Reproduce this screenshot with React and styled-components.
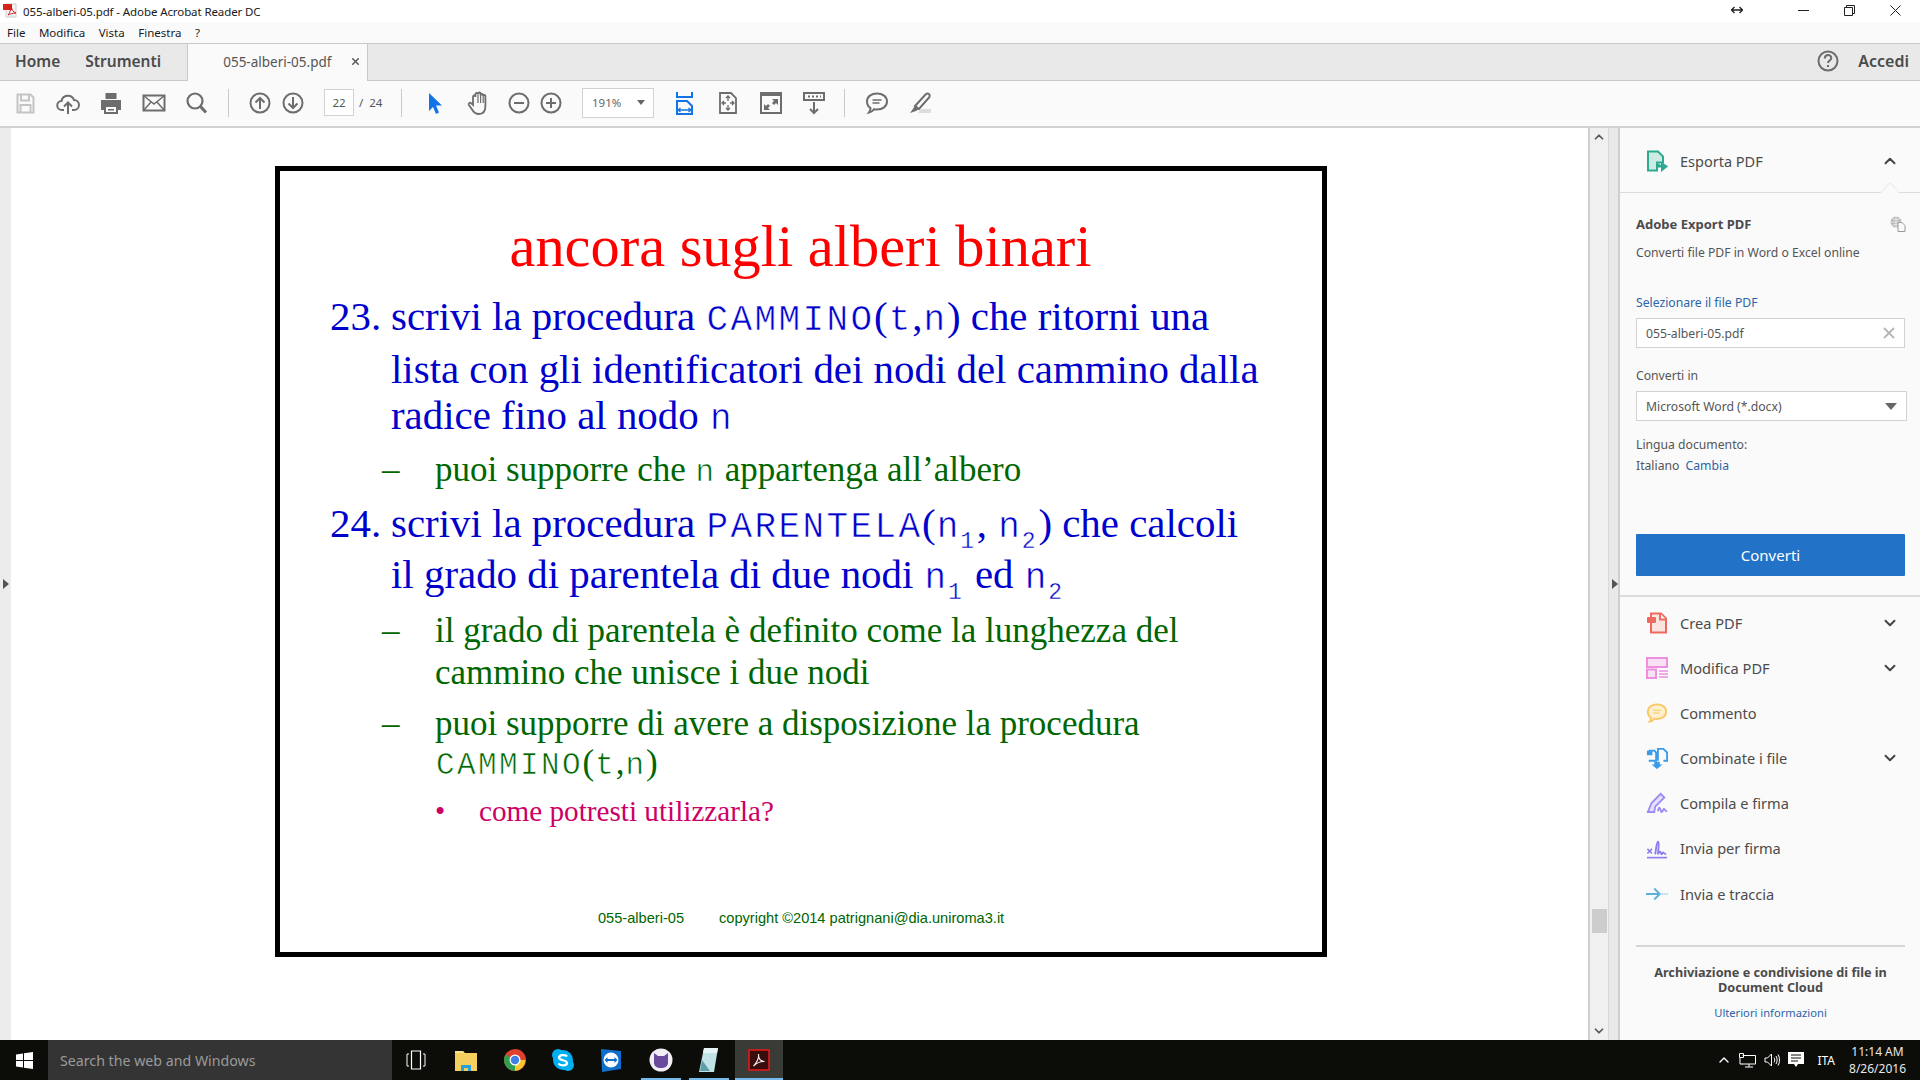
import React from 'react';
import styled, { createGlobalStyle } from 'styled-components';
import { ChevronUp, ChevronDown, X } from 'lucide-react';

const GlobalStyle = createGlobalStyle`
  html, body {
    margin: 0;
    padding: 0;
    overflow: hidden;
    background: #fff;
  }
  * { box-sizing: border-box; }
`;

const uiFont = `"Noto Sans", "Open Sans", "Liberation Sans", sans-serif`;

const Page = styled.div`
  width: 1920px;
  height: 1080px;
  display: flex;
  flex-direction: column;
  font-family: ${uiFont};
  color: #4b4b4b;
  overflow: hidden;
`;

/* window chrome */
const TitleBar = styled.div`
  height: 22px;
  background: #fff;
  display: flex;
  align-items: center;
  padding-left: 3px;
  font-size: 12px;
  color: #1a1a1a;
  flex: none;
`;
const TitleText = styled.span`
  margin-left: 4px;
  font-size: 11.5px;
  letter-spacing: -0.1px;
`;
const WindowControls = styled.div`
  margin-left: auto;
  display: flex;
  align-items: center;
  height: 22px;
  padding: 0 2px 2px 0;
  color: #222;
`;
const WinBtn = styled.div`
  width: ${(p) => p.$w}px;
  display: flex;
  justify-content: center;
`;

const MenuBar = styled.div`
  height: 21px;
  background: #fafafa;
  display: flex;
  align-items: center;
  padding-left: 7px;
  gap: 13.5px;
  font-size: 11.5px;
  color: #1a1a1a;
  flex: none;
`;

const TabBar = styled.div`
  height: 38px;
  background: #e9e9e9;
  border-top: 1px solid #c9c9c9;
  border-bottom: 1px solid #c9c9c9;
  display: flex;
  align-items: stretch;
  flex: none;
`;
const NavTab = styled.div`
  font-size: 15.5px;
  font-weight: 600;
  color: #4b4b4b;
  display: flex;
  align-items: center;
  padding-bottom: 2px;
  margin-left: ${(p) => p.$ml}px;
`;
const DocTab = styled.div`
  width: 181px;
  margin-left: 26px;
  margin-bottom: -1px;
  background: #fafafa;
  border-left: 1px solid #c9c9c9;
  border-right: 1px solid #c9c9c9;
  display: flex;
  align-items: center;
  padding: 0 0 2px 35px;
  font-size: 13.5px;
  color: #555;
`;
const TabClose = styled.span`
  margin-left: 19px;
  display: flex;
  color: #555;
`;
const TabRight = styled.div`
  margin-left: auto;
  display: flex;
  align-items: center;
  padding: 0 11px 2px 0;
  gap: 18px;
  font-size: 16px;
  font-weight: 600;
`;

const Toolbar = styled.div`
  height: 47px;
  background: #fafafa;
  border-bottom: 2px solid #d2d2d2;
  display: flex;
  align-items: center;
  padding: 0 0 2px 3px;
  flex: none;
`;
const Tool = styled.div`
  width: ${(p) => p.$w || 43}px;
  margin-left: ${(p) => p.$ml || 0}px;
  display: flex;
  justify-content: center;
  align-items: center;
`;
const ToolSep = styled.div`
  width: 1px;
  height: 28px;
  background: #c9c9c9;
  margin: 0 ${(p) => p.$r}px 0 ${(p) => p.$l}px;
`;
const PageInput = styled.div`
  width: 30px;
  height: 27px;
  margin-left: 15px;
  background: #fff;
  border: 1px solid #d2d2d2;
  font-size: 11.5px;
  display: flex;
  align-items: center;
  justify-content: center;
  color: #555;
`;
const PageTotal = styled.div`
  width: 47px;
  font-size: 11.5px;
  color: #555;
  padding-left: 5px;
  word-spacing: 3px;
`;
const ZoomSelect = styled.div`
  width: 72px;
  height: 30px;
  margin: 0 8px 0 15px;
  background: #fff;
  border: 1px solid #d2d2d2;
  font-size: 11.5px;
  color: #666;
  display: flex;
  align-items: center;
  padding-left: 9px;
  justify-content: space-between;
  padding-right: 8px;
`;
const Caret = styled.span`
  width: 0;
  height: 0;
  border-left: ${(p) => p.$s || 4}px solid transparent;
  border-right: ${(p) => p.$s || 4}px solid transparent;
  border-top: ${(p) => (p.$s || 4) + 1}px solid #666;
`;

/* main area */
const Main = styled.div`
  flex: 1;
  display: flex;
  min-height: 0;
`;
const LeftStrip = styled.div`
  width: 11px;
  background: #ececec;
  position: relative;
`;
const StripArrow = styled.span`
  position: absolute;
  top: 451px;
  left: ${(p) => p.$left}px;
  width: 0;
  height: 0;
  border-top: 5px solid transparent;
  border-bottom: 5px solid transparent;
  border-left: 6px solid #555;
`;
const DocArea = styled.div`
  flex: 1;
  background: #fff;
  padding: 38px 0 0 264px;
  border-right: 2px solid #cfcfcf;
`;
const Scrollbar = styled.div`
  width: 18px;
  background: #f0f0f0;
  position: relative;
  display: flex;
  flex-direction: column;
  justify-content: space-between;
  align-items: center;
  padding: 2px 0;
  color: #555;
`;
const Thumb = styled.div`
  position: absolute;
  top: 781px;
  left: 2px;
  width: 15px;
  height: 24px;
  background: #cdcdcd;
`;
const Splitter = styled.div`
  width: 12px;
  background: #e9e9e9;
  border-left: 1px solid #d8d8d8;
  border-right: 2px solid #cfcfcf;
  position: relative;
`;

/* slide */
const Slide = styled.div`
  width: 1052px;
  height: 791px;
  border: 5px solid #000;
  background: #fff;
  padding-top: 46px;
  font-family: "Liberation Serif", "Times New Roman", serif;
`;
const SlideTitle = styled.div`
  height: 60px;
  line-height: 60px;
  text-align: center;
  font-size: 58.4px;
  color: #ff0000;
  margin-right: 1px;
  margin-bottom: 18px;
`;
const Para = styled.div`
  display: grid;
  grid-template-columns: ${(p) => p.$col}px 1fr;
  padding-left: ${(p) => p.$left}px;
  margin-top: ${(p) => p.$mt || 0}px;
  color: ${(p) => p.$color};
  font-size: ${(p) => p.$size}px;
  line-height: ${(p) => p.$lh}px;
  white-space: nowrap;
`;
const Line = styled.div`
  height: ${(p) => p.$lh}px;
  margin-top: ${(p) => p.$mt || 0}px;
`;
/* the letters in the slide are thin Courier: narrower face, spaced out and thinned with a white stroke */
const Mono = styled.span`
  font-family: "Liberation Mono", "Courier New", monospace;
  font-size: ${(p) => (p.$small ? 31 : 36)}px;
  letter-spacing: 2.4px;
  margin-left: 1px;
  margin-right: -0.5px;
  -webkit-text-stroke: 0.6px #fff;
`;
const Sub = styled.sub`
  font-family: "Liberation Mono", "Courier New", monospace;
  font-size: 23px;
  letter-spacing: 2.8px;
  line-height: 0;
  vertical-align: -11px;
  -webkit-text-stroke: 0.4px #fff;
`;
const SlideFooter = styled.div`
  margin-top: 83px;
  height: 18px;
  line-height: 18px;
  padding-left: 318px;
  display: flex;
  gap: 35px;
  font-family: "Liberation Sans", Arial, sans-serif;
  font-size: 14.6px;
  color: #006600;
`;

/* right panel */
const Panel = styled.div`
  width: 300px;
  background: #fafafa;
  display: flex;
  flex-direction: column;
`;
const PanelHead = styled.div`
  height: 65px;
  border-bottom: 1px solid #dcdcdc;
  display: flex;
  align-items: center;
  padding: 2px 21px 0 26px;
  font-size: 14.5px;
  position: relative;
`;
const Notch = styled.span`
  position: absolute;
  right: 20px;
  bottom: -1px;
  width: 20px;
  height: 11px;
  background: #fafafa;
  clip-path: polygon(50% 0, 100% 100%, 0 100%);
  &::before {
    content: '';
    position: absolute;
    inset: 0;
    background: #dcdcdc;
    clip-path: polygon(50% 0, 100% 100%, 96% 100%, 50% 8%, 4% 100%, 0 100%);
  }
`;
const RowLabel = styled.span`
  margin-left: 12px;
  flex: 1;
`;
const PanelBody = styled.div`
  height: 404px;
  padding: 23px 14px 0 16px;
  border-bottom: 2px solid #dcdcdc;
  font-size: 12.2px;
`;
const ExportHead = styled.div`
  display: flex;
  justify-content: space-between;
  font-weight: 700;
  font-size: 13px;
  height: 16px;
  line-height: 16px;
`;
const Muted = styled.div`
  font-size: 12.2px;
  height: 16px;
  line-height: 16px;
  margin-top: ${(p) => p.$mt}px;
  color: ${(p) => (p.$link ? '#2c64a8' : '#555')};
`;
const Link = styled.span`
  color: #2c64a8;
  margin-left: 3px;
`;
const Field = styled.div`
  width: ${(p) => p.$w}px;
  height: 30px;
  margin-top: 7px;
  background: #fff;
  border: 1px solid #d2d2d2;
  display: flex;
  align-items: center;
  justify-content: space-between;
  padding: 0 9px;
  font-size: 12.2px;
  color: #555;
`;
const ConvertBtn = styled.div`
  width: 269px;
  height: 42px;
  margin-top: 60px;
  background: #2272c8;
  color: #fff;
  font-size: 15px;
  display: flex;
  align-items: center;
  justify-content: center;
  border-radius: 1px;
`;
const ToolList = styled.div`
  padding: 3px 21px 0 26px;
  height: 348px;
`;
const ToolRow = styled.div`
  height: ${(p) => p.$h || 45}px;
  display: flex;
  align-items: center;
  font-size: 14.6px;
`;
const RowIcon = styled.span`
  width: 22px;
  display: flex;
  justify-content: center;
`;
const Divider = styled.div`
  height: 2px;
  margin: 0 15px 0 16px;
  background: #d6d6d6;
`;
const CloudBlock = styled.div`
  text-align: center;
  padding: 18px 15px 0 16px;
  font-size: 12.7px;
  font-weight: 700;
  line-height: 15px;
`;
const CloudLink = styled.div`
  margin-top: 10px;
  font-weight: 400;
  font-size: 11.2px;
  color: #2c64a8;
`;

/* taskbar */
const Taskbar = styled.div`
  height: 40px;
  background: #0c0d08;
  display: flex;
  align-items: stretch;
  flex: none;
  color: #fff;
`;
const StartBtn = styled.div`
  width: 48px;
  display: flex;
  align-items: center;
  justify-content: center;
`;
const SearchBox = styled.div`
  width: 344px;
  background: #343434;
  color: #9a9a9a;
  font-size: 14.2px;
  display: flex;
  align-items: center;
  padding-left: 12px;
`;
const TaskIcon = styled.div`
  width: 48px;
  margin-left: ${(p) => p.$ml || 0}px;
  display: flex;
  align-items: center;
  justify-content: center;
  position: relative;
  background: ${(p) => (p.$active ? '#3a3a36' : 'transparent')};
  &::after {
    content: '';
    display: ${(p) => (p.$open ? 'block' : 'none')};
    position: absolute;
    left: ${(p) => (p.$active ? 0 : 4)}px;
    right: ${(p) => (p.$active ? 0 : 4)}px;
    bottom: 0;
    height: 2px;
    background: #76b9ed;
  }
`;
const Tray = styled.div`
  margin-left: auto;
  display: flex;
  align-items: center;
  padding-right: 14px;
  font-size: 12px;
`;
const TrayIcon = styled.span`
  display: flex;
  margin-right: ${(p) => p.$mr || 8}px;
`;
const Clock = styled.div`
  margin-left: 14px;
  text-align: center;
  font-size: 12px;
  line-height: 17px;
  color: #e8e8e8;
`;

/* ---- drawings ---- */
const gray = '#6d6d6d';
const Ico = ({ s = 24, w, h, children, vb }) => (
  <svg width={w || s} height={h || s} viewBox={vb || `0 0 ${w || s} ${h || s}`} fill="none" style={{ display: 'block' }}>
    {children}
  </svg>
);

const PdfFavicon = () => (
  <Ico s={16}>
    <path d="M3 1h10v13H3z" fill="#f5f5f5" stroke="#ccc" />
    <path d="M0 1h9v6H0z" fill="#d8231c" />
    <path d="M5 12c3-4 3-7 3-9 1 4 2 6 5 7-3 0-6 1-8 2z" stroke="#c22" fill="none" />
  </Ico>
);
const SaveIcon = () => (
  <Ico>
    <path d="M4.500 3.500h13l3 3v15h-16z" stroke="#c4c4c4" strokeWidth="2" />
    <path d="M8 3.500v6h8v-6M7.500 21v-7h10v7" stroke="#c4c4c4" strokeWidth="2" />
  </Ico>
);
const UploadIcon = () => (
  <Ico>
    <path d="M8 19H6a4.500 4.500 0 0 1-.5-9A6.500 6.500 0 0 1 18 9a5 5 0 0 1 0 10h-2" stroke={gray} strokeWidth="2" />
    <path d="M12 23V12M8 15.500l4-4 4 4" stroke={gray} strokeWidth="2" />
  </Ico>
);
const PrintIcon = () => (
  <Ico>
    <path d="M6.500 2h11v6h-11z" fill={gray} />
    <path d="M2 9h20v10h-4v-4H6v4H2z" fill={gray} />
    <path d="M6 15h12v7H6z" stroke={gray} strokeWidth="2" />
    <path d="M9 18h6v1.500H9z" fill={gray} />
  </Ico>
);
const MailIcon = () => (
  <Ico>
    <path d="M1.500 4.500h21v15h-21z" stroke={gray} strokeWidth="2" />
    <path d="M2 5l10 8 10-8M2 19l7-8M22 19l-7-8" stroke={gray} strokeWidth="1.500" />
  </Ico>
);
const SearchIcon = () => (
  <Ico>
    <circle cx="10" cy="10" r="7.500" stroke={gray} strokeWidth="2.200" />
    <path d="M15.500 15.500L21 21.500" stroke={gray} strokeWidth="3" />
  </Ico>
);
const CircleIcon = ({ d }) => (
  <Ico>
    <circle cx="12" cy="12" r="9.500" stroke={gray} strokeWidth="2" />
    <path d={d} stroke={gray} strokeWidth="2" />
  </Ico>
);
const CursorIcon = () => (
  <Ico>
    <path d="M6 2l13 12.500h-6l3 7-3 1.500-3-7-4 4z" fill="#1473e6" />
  </Ico>
);
const HandIcon = () => (
  <Ico w={24} h={26}>
    <path
      d="M7 15V7c0-2 2.400-2 2.400 0V4.500c0-2 2.600-2 2.600 0V4c0-2 2.600-2 2.600 0v1.500c0-2 2.400-2 2.400 0V6c0-1.500 2.400-1.500 2.400 0v10c0 5-2.500 8-6.500 8-3.500 0-5-1.500-6.500-4l-3.500-5c-1-1.500 1-3 2.200-1.800z"
      stroke={gray}
      strokeWidth="1.800"
    />
    <path d="M12 5v8M14.600 5v8M17.200 6v7" stroke={gray} strokeWidth="1.200" />
  </Ico>
);
const FitWidthIcon = () => (
  <Ico>
    <path d="M5 1v5h15V1" stroke="#1473e6" strokeWidth="2" />
    <path d="M5 23V10h10l5 5v8z" stroke="#1473e6" strokeWidth="2" />
    <path d="M6 19h13M6 19l2.500-2M6 19l2.500 2M19 19l-2.500-2M19 19l-2.500 2" stroke="#1473e6" strokeWidth="1.300" />
  </Ico>
);
const FitPageIcon = () => (
  <Ico>
    <path d="M4 2h11l5 5v15H4z" stroke={gray} strokeWidth="1.800" />
    <path d="M12 5v5M10 7l2-2 2 2M12 14v5M10 17l2 2 2-2M6 12h4M8 10l-2 2 2 2M14 12h4M16 10l2 2-2 2" stroke={gray} strokeWidth="1.300" />
  </Ico>
);
const FullIcon = () => (
  <Ico>
    <path d="M2 2h20v20H2z" stroke={gray} strokeWidth="2" />
    <path d="M2 4h20" stroke={gray} strokeWidth="2" />
    <path d="M13 8h6v6l-2-2-2 2-2-2 2-2zM11 19H5v-6l2 2 2-2 2 2-2 2z" fill={gray} />
  </Ico>
);
const ScrollIcon = () => (
  <Ico>
    <path d="M2 2h20v7H2z" stroke={gray} strokeWidth="2" />
    <path d="M6 5.500h2M10 5.500h2M14 5.500h2M18 5.500h1" stroke={gray} strokeWidth="2" />
    <path d="M12 11v11M8 18l4 4 4-4" stroke={gray} strokeWidth="2" />
  </Ico>
);
const CommentIcon = ({ color = gray, fill = 'none' }) => (
  <Ico>
    <path
      d="M12 2.500c5.500 0 10 3 10 8s-4.500 8-10 8c-1 0-2 0-3-.3-1 1.500-3 3-5 3.300 1-1.200 1.500-2.500 1.500-4.300C3 15.500 2 13 2 10.500c0-5 4.500-8 10-8z"
      stroke={color}
      fill={fill}
      strokeWidth="2"
    />
    <path d="M7.500 9h9M7.500 12h7" stroke={color} strokeWidth="1.300" />
  </Ico>
);
const HighlightIcon = () => (
  <Ico>
    <path d="M10 22h13v-4H13z" fill="#dcdcdc" />
    <path d="M7 15L18 3c2-1.500 4.500.5 3.500 3L11 18z" stroke={gray} strokeWidth="2" />
    <path d="M7 15l4 3-3 2-6 2z" fill={gray} />
  </Ico>
);
const HelpIcon = () => (
  <Ico>
    <circle cx="12" cy="12" r="9.500" stroke={gray} strokeWidth="2" />
    <path d="M8.800 9.500c0-4.500 6.500-4.500 6.500-.5 0 2.500-3.300 2.500-3.300 5" stroke={gray} strokeWidth="2" />
    <path d="M11 16h2v2h-2z" fill={gray} />
  </Ico>
);
const ExportIcon = () => (
  <Ico w={22} h={22}>
    <path d="M2 1.500h10l5 5v6h-6v8H2z" fill="#cdeae3" stroke="#2dab90" strokeWidth="2" />
    <path d="M11 13v3.500h7M16 13.500l4.500 3-4.500 3.500z" stroke="#2dab90" strokeWidth="2" fill="#2dab90" />
  </Ico>
);
const GlobeDocIcon = () => (
  <Ico s={16}>
    <circle cx="6" cy="6" r="5.500" fill="#b8b8b8" />
    <path d="M0 6h12M6 0v12M2 2.500c3 1.500 5 1.500 8 0M2 9.500c3-1.500 5-1.500 8 0" stroke="#fafafa" strokeWidth=".7" />
    <path d="M8 6.500h4l3 3v6H8z" fill="#fafafa" stroke="#999" />
  </Ico>
);
const CreateIcon = () => (
  <Ico w={22} h={22}>
    <path d="M5 1.500h10l5 5v14H5z" fill="#fbe3df" stroke="#ee6a5f" strokeWidth="2" />
    <path d="M14 1.500v6h6" stroke="#ee6a5f" strokeWidth="2" fill="#fafafa" />
    <rect x="1" y="5" width="9" height="6" rx="1" fill="#ee6a5f" />
  </Ico>
);
const EditIcon = () => (
  <Ico w={22} h={22}>
    <path d="M1 1h20v9H1z" fill="#f7e2f5" stroke="#ef8fe2" strokeWidth="2" />
    <path d="M1 12.500h9V21H1z" fill="#f7e2f5" stroke="#ef8fe2" strokeWidth="2" />
    <path d="M13 14h9M13 17h9M13 20h9" stroke="#ef8fe2" strokeWidth="1.300" />
  </Ico>
);
const CombineIcon = () => (
  <Ico>
    <path d="M3 4h6l2 2v9H3" stroke="#3a9be8" strokeWidth="2" />
    <path d="M13 15V2h6l4 4v9h-4" stroke="#3a9be8" strokeWidth="2" />
    <path d="M1 4h6v5H1z" fill="#3a9be8" />
    <path d="M9 16h6v3h3l-6 5-6-5h3z" fill="#3a9be8" />
  </Ico>
);
const FillSignIcon = () => (
  <Ico>
    <path d="M2 22L6 12 16 2l4 4-10 10-1 6z" fill="#e6e0ff" stroke="#9c8cf2" strokeWidth="2" />
    <path d="M2 22h6M13 21c1-5 2-5 3-1s2 1 3-1 1 2 4 2" stroke="#9c8cf2" strokeWidth="2" />
  </Ico>
);
const SendSignIcon = () => (
  <Ico>
    <path d="M1 22.500h22" stroke="#8c7eef" strokeWidth="1.800" />
    <path d="M1.500 13l5 5M6.500 13l-5 5" stroke="#8c7eef" strokeWidth="1.800" />
    <path d="M10 19c1-5 1.500-14 3-14s.5 9 0 14c1-3 2.500-4 3-2s1 2.500 2 .5 1 1 4 1" stroke="#8c7eef" strokeWidth="2" />
  </Ico>
);
const TrackIcon = () => (
  <Ico w={24} h={16}>
    <path d="M0 8h15M9 2l6 6-6 6" stroke="#5cb0dc" strokeWidth="2" />
    <path d="M17 8h2M20 8h1.500M22.500 8h1.500" stroke="#9ccde8" strokeWidth="1.500" />
  </Ico>
);
const ClearIcon = () => (
  <Ico s={12}>
    <path d="M1 1l10 10M11 1L1 11" stroke="#b5b5b5" strokeWidth="1.800" />
  </Ico>
);
const WinLogo = () => (
  <Ico s={17}>
    <path d="M0 2.500l7-1v6.500H0zM8 1.300L17 0v8H8zM0 9h7v6.500l-7-1zM8 9h9v8l-9-1.300z" fill="#fff" />
  </Ico>
);
const TaskViewIcon = () => (
  <Ico w={20} h={20}>
    <path d="M5.500 1h9v18h-9z" stroke="#fff" strokeWidth="1.200" />
    <path d="M3 4H1v12h2M17 4h2v12h-2" stroke="#fff" strokeWidth="1" />
  </Ico>
);
const FolderIcon = () => (
  <Ico w={22} h={22}>
    <path d="M0 2h8l2 2h12v18H0z" fill="#f4cf5d" />
    <path d="M0 2h8l1 2H0z" fill="#f9e28f" />
    <path d="M6 22v-6h10v6h-3v-3h-4v3z" fill="#2a9fd8" />
  </Ico>
);
const ChromeIcon = () => (
  <Ico>
    <circle cx="12" cy="12" r="11" fill="#e0402f" />
    <path d="M12 12L2.500 6.500A11 11 0 0 0 12 23l5-8z" fill="#2f9e4d" />
    <path d="M12 12h10.500A11 11 0 0 1 12 23z" fill="#f8c62d" />
    <circle cx="12" cy="12" r="5.500" fill="#fff" />
    <circle cx="12" cy="12" r="4.200" fill="#3f7fe6" />
  </Ico>
);
const SkypeIcon = () => (
  <Ico>
    <circle cx="7" cy="7" r="6" fill="#00aff0" />
    <circle cx="17" cy="17" r="6" fill="#00aff0" />
    <circle cx="12" cy="12" r="10" fill="#00aff0" />
    <path d="M16 8.500C15 6.500 8 6.500 8 9.500c0 3.500 8 2 8 5.500 0 3-7 3-8.500.5" stroke="#fff" strokeWidth="2.300" />
  </Ico>
);
const TeamViewerIcon = () => (
  <Ico>
    <path d="M2 1l20 2v18L3 24z" fill="#0f6fcd" />
    <circle cx="12" cy="12" r="7.500" fill="#fff" />
    <path d="M5.500 12l3-3v2h7V9l3 3-3 3v-2h-7v2z" fill="#0f6fcd" />
  </Ico>
);
const CatIcon = () => (
  <Ico>
    <circle cx="12" cy="12" r="11.500" fill="#f1eef5" />
    <path d="M5 5l4 3h6l4-3v10c0 3-3 5-7 5s-7-2-7-5z" fill="#6a4a9c" />
  </Ico>
);
const NotepadIcon = () => (
  <Ico s={26}>
    <path d="M8 1h14l-4 24H3z" fill="#bfe3e6" />
    <path d="M8 1h14l-1 5H7z" fill="#e6f4f5" />
    <path d="M4 24l2-11 8 11z" fill="#5d9ea8" />
  </Ico>
);
const AcrobatIcon = () => (
  <Ico s={22}>
    <rect x="1" y="1" width="20" height="20" fill="#3a0d0c" stroke="#e01b1b" strokeWidth="1.600" />
    <path d="M5.500 17c4-4.500 5.500-9 5-12-.3 4 2 7 6 7.500-4-.3-8 1.500-11 4.500z" stroke="#f2f2f2" strokeWidth="1.100" />
  </Ico>
);
const NetIcon = () => (
  <Ico w={17} h={15}>
    <path d="M3.500 2.500h13V11h-13M10 11v3M6 14h8" stroke="#fff" />
    <path d="M.5.500h4v4h-4zM1 5v6h3" stroke="#fff" />
  </Ico>
);
const SpeakerIcon = () => (
  <Ico w={17} h={14}>
    <path d="M1 5h2.500L7.500 1v12l-4-4H1z" stroke="#fff" />
    <path d="M10 4.500c1 1.500 1 3.500 0 5M12 3c1.500 2.500 1.500 5.500 0 8M14 1.500c2 3 2 8 0 11" stroke="#fff" />
  </Ico>
);
const NotifIcon = () => (
  <Ico w={17} h={16}>
    <path d="M0 0h16v12H10l-2 3-2-3H0z" fill="#fff" />
    <path d="M3 3h10M3 6h10M3 9h7" stroke="#0c0d08" />
  </Ico>
);

const blue = '#0000cc';
const green = '#006600';

const App = () => (
  <Page>
    <GlobalStyle />
    <TitleBar>
      <PdfFavicon />
      <TitleText>055-alberi-05.pdf - Adobe Acrobat Reader DC</TitleText>
      <WindowControls>
        <WinBtn $w={88}>
          <Ico w={12} h={8}>
            <path d="M1 4h10M3.500 1L.5 4l3 3M8.500 1l3 3-3 3" stroke="#222" strokeWidth="1.300" />
          </Ico>
        </WinBtn>
        <WinBtn $w={45}>
          <Ico s={11}><path d="M0 5.500h11" stroke="#222" /></Ico>
        </WinBtn>
        <WinBtn $w={46}>
          <Ico s={11}><path d="M.5 2.500h8v8h-8zM2.500 2.500v-2h8v8h-2" stroke="#222" /></Ico>
        </WinBtn>
        <WinBtn $w={46}>
          <Ico s={11}><path d="M.5.500l10 10M10.500.500l-10 10" stroke="#222" /></Ico>
        </WinBtn>
      </WindowControls>
    </TitleBar>
    <MenuBar>
      <span>File</span>
      <span>Modifica</span>
      <span>Vista</span>
      <span>Finestra</span>
      <span>?</span>
    </MenuBar>
    <TabBar>
      <NavTab $ml={15}>Home</NavTab>
      <NavTab $ml={25}>Strumenti</NavTab>
      <DocTab>
        055-alberi-05.pdf
        <TabClose><X size={11} strokeWidth={3} /></TabClose>
      </DocTab>
      <TabRight>
        <HelpIcon />
        <span>Accedi</span>
      </TabRight>
    </TabBar>
    <Toolbar>
      <Tool><SaveIcon /></Tool>
      <Tool><UploadIcon /></Tool>
      <Tool><PrintIcon /></Tool>
      <Tool><MailIcon /></Tool>
      <Tool><SearchIcon /></Tool>
      <ToolSep $l={10} $r={14} />
      <Tool $w={33}><CircleIcon d="M12 18V7M7.500 11.500L12 7l4.500 4.500" /></Tool>
      <Tool $w={33}><CircleIcon d="M12 6v11M7.500 12.500L12 17l4.500-4.500" /></Tool>
      <PageInput>22</PageInput>
      <PageTotal>/ 24</PageTotal>
      <ToolSep $l={0} $r={11} />
      <Tool><CursorIcon /></Tool>
      <Tool><HandIcon /></Tool>
      <Tool $w={33} $ml={3}><CircleIcon d="M7 12h10" /></Tool>
      <Tool $w={32}><CircleIcon d="M7 12h10M12 7v10" /></Tool>
      <ZoomSelect>191%<Caret /></ZoomSelect>
      <Tool $w={44}><FitWidthIcon /></Tool>
      <Tool><FitPageIcon /></Tool>
      <Tool><FullIcon /></Tool>
      <Tool><ScrollIcon /></Tool>
      <ToolSep $l={9} $r={10} />
      <Tool><CommentIcon /></Tool>
      <Tool><HighlightIcon /></Tool>
    </Toolbar>
    <Main>
      <LeftStrip><StripArrow $left={3} /></LeftStrip>
      <DocArea>
        <Slide>
          <SlideTitle>ancora sugli alberi binari</SlideTitle>
          <Para $left={50} $col={61} $color={blue} $size={40.9} $lh={44}>
            <span>23.</span>
            <div>
              <Line $lh={44}>scrivi la procedura <Mono>CAMMINO</Mono>(<Mono>t</Mono>,<Mono>n</Mono>) che ritorni una</Line>
              <Line $lh={44} $mt={9}>lista con gli identificatori dei nodi del cammino dalla</Line>
              <Line $lh={44} $mt={2}>radice fino al nodo <Mono>n</Mono></Line>
            </div>
          </Para>
          <Para $left={102} $col={53} $color={green} $size={35} $lh={36} $mt={14}>
            <span>–</span>
            <Line $lh={36}>puoi supporre che <Mono $small>n</Mono> appartenga all’albero</Line>
          </Para>
          <Para $left={50} $col={61} $color={blue} $size={40.9} $lh={44} $mt={14}>
            <span>24.</span>
            <div>
              <Line $lh={44}>scrivi la procedura <Mono>PARENTELA</Mono>(<Mono>n</Mono><Sub>1</Sub>, <Mono>n</Mono><Sub>2</Sub>) che calcoli</Line>
              <Line $lh={44} $mt={7}>il grado di parentela di due nodi <Mono>n</Mono><Sub>1</Sub> ed <Mono>n</Mono><Sub>2</Sub></Line>
            </div>
          </Para>
          <Para $left={102} $col={53} $color={green} $size={35} $lh={36} $mt={16}>
            <span>–</span>
            <div>
              <Line $lh={36}>il grado di parentela è definito come la lunghezza del</Line>
              <Line $lh={36} $mt={6}>cammino che unisce i due nodi</Line>
            </div>
          </Para>
          <Para $left={102} $col={53} $color={green} $size={35} $lh={36} $mt={15}>
            <span>–</span>
            <div>
              <Line $lh={36}>puoi supporre di avere a disposizione la procedura</Line>
              <Line $lh={36} $mt={3}><Mono $small>CAMMINO</Mono>(<Mono $small>t</Mono>,<Mono $small>n</Mono>)</Line>
            </div>
          </Para>
          <Para $left={155} $col={44} $color="#cc0066" $size={29.2} $lh={30} $mt={15}>
            <span>•</span>
            <Line $lh={30}>come potresti utilizzarla?</Line>
          </Para>
          <SlideFooter>
            <span>055-alberi-05</span>
            <span>copyright ©2014 patrignani@dia.uniroma3.it</span>
          </SlideFooter>
        </Slide>
      </DocArea>
      <Scrollbar>
        <ChevronUp size={14} strokeWidth={3} />
        <Thumb />
        <ChevronDown size={14} strokeWidth={3} />
      </Scrollbar>
      <Splitter><StripArrow $left={3} /></Splitter>
      <Panel>
        <PanelHead>
          <ExportIcon />
          <RowLabel>Esporta PDF</RowLabel>
          <ChevronUp size={18} strokeWidth={2.6} color="#444" />
          <Notch />
        </PanelHead>
        <PanelBody>
          <ExportHead>
            Adobe Export PDF
            <GlobeDocIcon />
          </ExportHead>
          <Muted $mt={13}>Converti file PDF in Word o Excel online</Muted>
          <Muted $mt={34} $link>Selezionare il file PDF</Muted>
          <Field $w={269}>055-alberi-05.pdf<ClearIcon /></Field>
          <Muted $mt={20}>Converti in</Muted>
          <Field $w={271}>Microsoft Word (*.docx)<Caret $s={6} /></Field>
          <Muted $mt={16}>Lingua documento:</Muted>
          <Muted $mt={5}>Italiano <Link>Cambia</Link></Muted>
          <ConvertBtn>Converti</ConvertBtn>
        </PanelBody>
        <ToolList>
          <ToolRow>
            <RowIcon><CreateIcon /></RowIcon><RowLabel>Crea PDF</RowLabel>
            <ChevronDown size={18} strokeWidth={2.6} color="#444" />
          </ToolRow>
          <ToolRow>
            <RowIcon><EditIcon /></RowIcon><RowLabel>Modifica PDF</RowLabel>
            <ChevronDown size={18} strokeWidth={2.6} color="#444" />
          </ToolRow>
          <ToolRow>
            <RowIcon><CommentIcon color="#fbc765" fill="#fdf0cf" /></RowIcon><RowLabel>Commento</RowLabel>
          </ToolRow>
          <ToolRow>
            <RowIcon><CombineIcon /></RowIcon><RowLabel>Combinate i file</RowLabel>
            <ChevronDown size={18} strokeWidth={2.6} color="#444" />
          </ToolRow>
          <ToolRow>
            <RowIcon><FillSignIcon /></RowIcon><RowLabel>Compila e firma</RowLabel>
          </ToolRow>
          <ToolRow $h={46}>
            <RowIcon><SendSignIcon /></RowIcon><RowLabel>Invia per firma</RowLabel>
          </ToolRow>
          <ToolRow $h={46}>
            <RowIcon><TrackIcon /></RowIcon><RowLabel>Invia e traccia</RowLabel>
          </ToolRow>
        </ToolList>
        <Divider />
        <CloudBlock>
          Archiviazione e condivisione di file in Document Cloud
          <CloudLink>Ulteriori informazioni</CloudLink>
        </CloudBlock>
      </Panel>
    </Main>
    <Taskbar>
      <StartBtn><WinLogo /></StartBtn>
      <SearchBox>Search the web and Windows</SearchBox>
      <TaskIcon><TaskViewIcon /></TaskIcon>
      <TaskIcon $ml={2}><FolderIcon /></TaskIcon>
      <TaskIcon $ml={1}><ChromeIcon /></TaskIcon>
      <TaskIcon><SkypeIcon /></TaskIcon>
      <TaskIcon><TeamViewerIcon /></TaskIcon>
      <TaskIcon $ml={2} $open><CatIcon /></TaskIcon>
      <TaskIcon $open><NotepadIcon /></TaskIcon>
      <TaskIcon $ml={2} $open $active><AcrobatIcon /></TaskIcon>
      <Tray>
        <TrayIcon $mr={7}><ChevronUp size={16} /></TrayIcon>
        <TrayIcon $mr={8}><NetIcon /></TrayIcon>
        <TrayIcon $mr={7}><SpeakerIcon /></TrayIcon>
        <TrayIcon $mr={12}><NotifIcon /></TrayIcon>
        <span>ITA</span>
        <Clock>11:14 AM<br />8/26/2016</Clock>
      </Tray>
    </Taskbar>
  </Page>
);

export default App;
